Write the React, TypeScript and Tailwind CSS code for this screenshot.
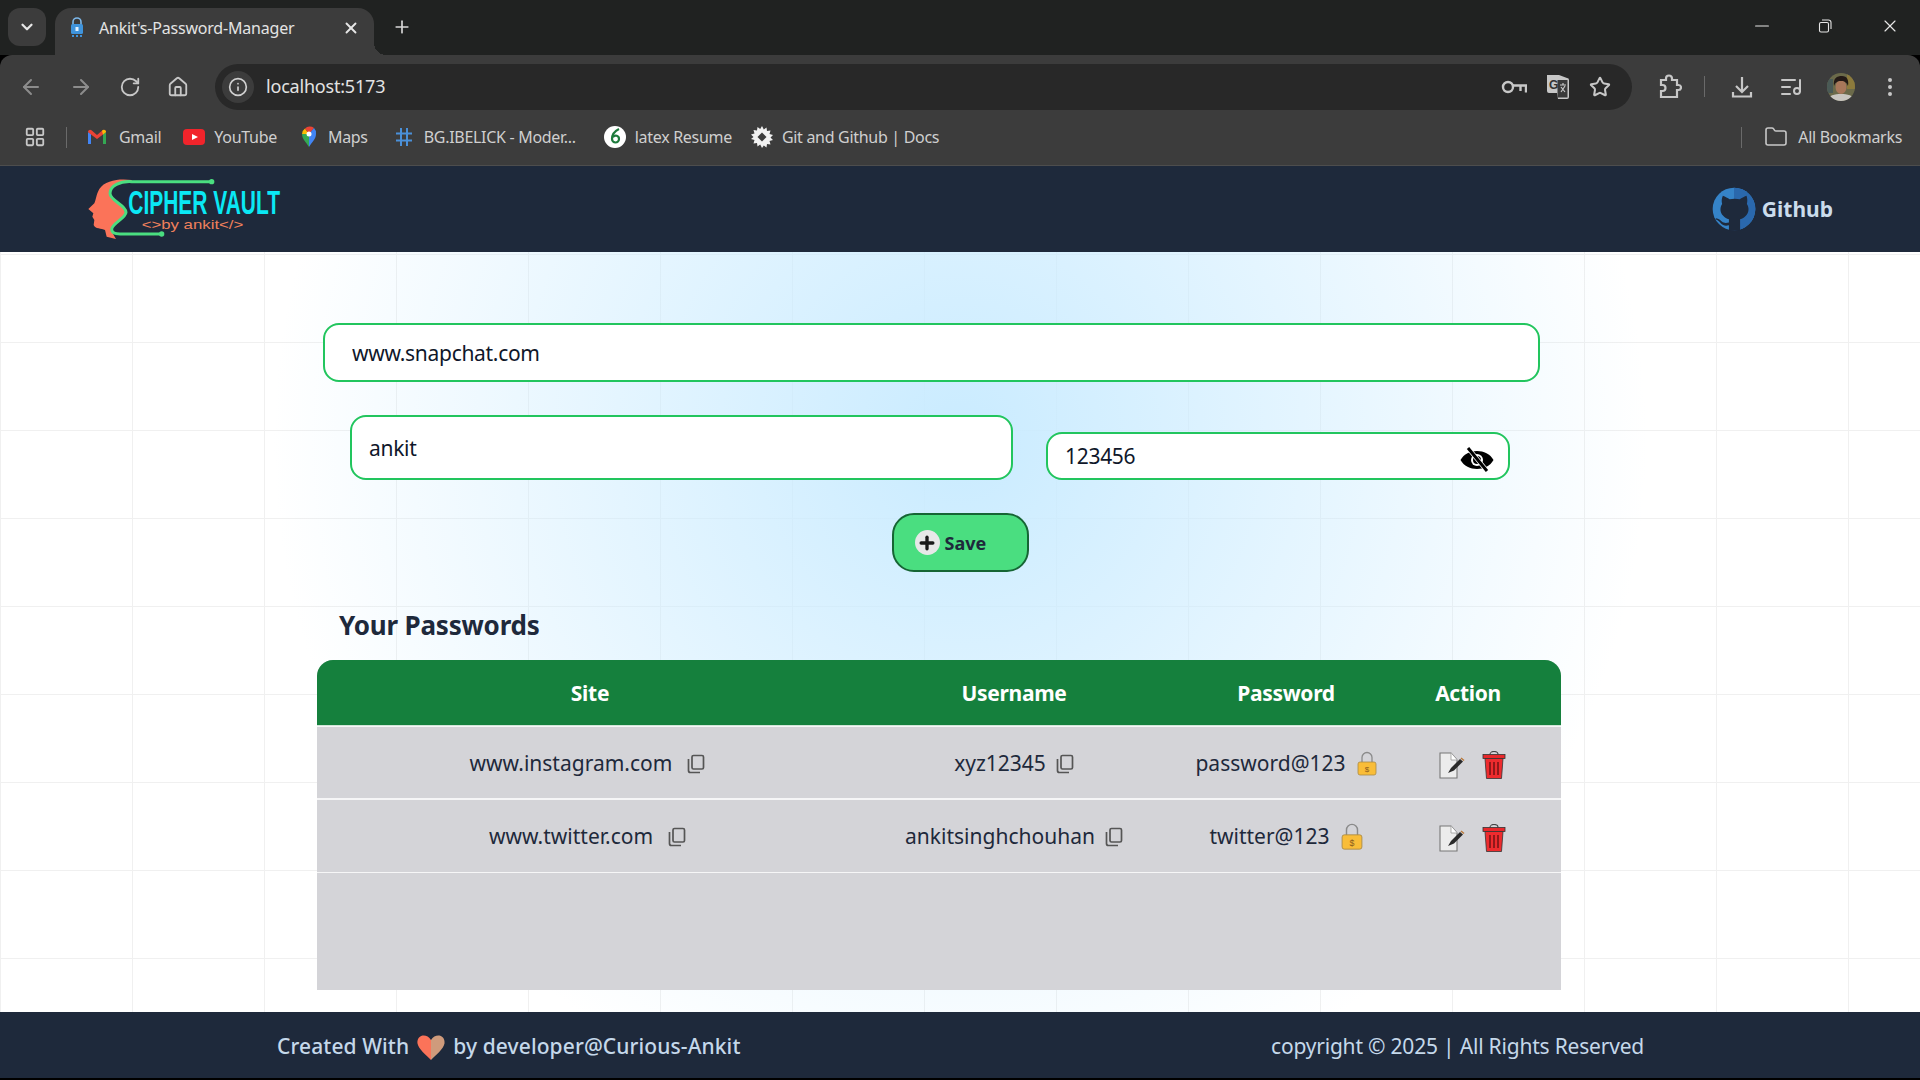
import { ArrowLeft, ArrowRight, ChevronDown, EllipsisVertical, Folder, House, Info, LayoutGrid, ListMusic, Minus, Plus, RotateCw, Star, X } from "lucide-react"

const ROWS = [
  { site: "www.instagram.com", user: "xyz12345", pass: "password@123", big: false },
  { site: "www.twitter.com", user: "ankitsinghchouhan", pass: "twitter@123", big: true },
]

function TabLock() {
  return (
    <svg width="16" height="22" viewBox="0 0 16 22">
      <path d="M4 8V5a4 4 0 0 1 8 0v3" fill="none" stroke="#7db8ea" strokeWidth="1.6" />
      <rect x="2" y="7" width="12" height="10" rx="1.5" fill="#3f94dc" />
      <rect x="6.5" y="10" width="3" height="4" fill="#dff0ff" />
      <path d="M3 19h2M7 19h2M11 19h2" stroke="#3f94dc" strokeWidth="2" />
    </svg>
  )
}

function GmailIcon() {
  return (
    <svg width="20" height="16" viewBox="0 0 20 16">
      <path d="M1 15V3l3 2v10z" fill="#4285f4" />
      <path d="M16 15V5l3-2v12z" fill="#34a853" />
      <path d="M1 3c0-2 2-3 3.500-1.800L10 6l5.500-4.800C17 0 19 1 19 3l-3 2.500-6 4.500-6-4.500z" fill="#ea4335" />
      <path d="M16 5.500l3-2.500c0-2-2-3-3.500-1.800L15 2z" fill="#fbbc04" />
    </svg>
  )
}

function YoutubeIcon() {
  return (
    <svg width="22" height="16" viewBox="0 0 22 16">
      <rect width="22" height="16" rx="4" fill="#f1242b" />
      <path d="M9 5l6 3-6 3z" fill="#fff" />
    </svg>
  )
}

function MapsIcon() {
  return (
    <svg width="16" height="22" viewBox="0 0 16 22">
      <path d="M8 21C5 16 1 13 1 8h7z" fill="#34a853" />
      <path d="M8 21c3-5 7-8 7-13H8z" fill="#4285f4" />
      <path d="M1 8a7 7 0 0 1 3-5.500L8 8z" fill="#fbbc04" />
      <path d="M4 2.500A7 7 0 0 1 13 2L8 8z" fill="#ea4335" />
      <path d="M13 2a7 7 0 0 1 2 6H8z" fill="#4285f4" />
      <circle cx="8" cy="8" r="2.500" fill="#fff" />
    </svg>
  )
}

function HashIcon() {
  return (
    <svg width="18" height="20" viewBox="0 0 18 20" fill="none" stroke="#4a90d9" strokeWidth="2">
      <path d="M6 1v18M12 1v18M1 6.500h16M1 13.500h16" />
    </svg>
  )
}

function LatexIcon() {
  return (
    <svg width="22" height="22" viewBox="0 0 22 22">
      <circle cx="11" cy="11" r="11" fill="#fff" />
      <path d="M15 3c-4 2-7 6-7 10a3.500 3.500 0 1 0 7 0 3.300 3.300 0 0 0-6-2" fill="none" stroke="#1d7a3c" strokeWidth="2.200" />
    </svg>
  )
}

function GearIcon() {
  return (
    <svg width="22" height="22" viewBox="0 0 22 22" fill="#f2f2f2">
      <path d="M11 0l1.800 3.500L15.500 1.500l.5 3.500 3.500-.5-1 3.500 3.500 1-2.500 2.500 2.500 2.500-3.500 1 1 3.500-3.500-.5-.5 3.500-2.700-2L11 22l-1.800-3.500-2.700 2-.5-3.500-3.500.5 1-3.500-3.500-1L2.500 11 0 8.500l3.500-1-1-3.500 3.500.5.500-3.500 2.700 2z" />
      <path d="M11 6.500l4.500 4.500-4.500 4.500L6.500 11z" fill="#3c3c3c" />
    </svg>
  )
}

function KeyIcon() {
  return (
    <svg width="26" height="18" viewBox="0 0 26 18" fill="none" stroke="#c7c7c7" strokeWidth="2.400">
      <circle cx="7" cy="9" r="5" />
      <path d="M12 7.500h13v7M19.500 8v5" />
    </svg>
  )
}

function TranslateIcon() {
  return (
    <svg width="24" height="26" viewBox="0 0 24 26">
      <path d="M1 1h12l8 3a2 2 0 0 1 2 2v17a2 2 0 0 1-2 2H12l-1-6H3a2 2 0 0 1-2-2z" fill="#c7c7c7" />
      <rect x="11.500" y="6" width="10" height="17.500" fill="#3a3a3a" />
      <text x="3" y="15" fontSize="12" fontWeight="700" fill="#333" fontFamily="Liberation Sans, sans-serif">G</text>
      <path d="M14 11h6M17 9v2M15 18l4-6M15 13l4 5" stroke="#c7c7c7" strokeWidth="1.200" />
    </svg>
  )
}

function PuzzleIcon() {
  return (
    <svg width="24" height="26" viewBox="0 0 24 26" fill="none" stroke="#c7c7c7" strokeWidth="2.200">
      <path d="M3 6h5V4.500a3 3 0 0 1 6 0V6h5v5h1.500a2.500 2.500 0 0 1 0 5H19v7H3v-6h1.500a3 3 0 0 0 0-6H3z" />
    </svg>
  )
}

function DownloadIcon() {
  return (
    <svg width="24" height="24" viewBox="0 0 24 24" fill="none" stroke="#c7c7c7" strokeWidth="2.200">
      <path d="M12 2v15M6 11l6 6 6-6M3 17v4.500h18V17" />
    </svg>
  )
}

function Avatar() {
  return (
    <svg width="28" height="28" viewBox="0 0 28 28">
      <defs>
        <clipPath id="av">
          <circle cx="14" cy="14" r="14" />
        </clipPath>
      </defs>
      <g clipPath="url(#av)">
        <rect width="28" height="28" fill="#6b6a4a" />
        <rect x="20" width="8" height="16" fill="#8c7a3c" />
        <rect x="0" y="6" width="6" height="14" fill="#4a5a56" />
        <path d="M0 28c1-6 8-7 14-7s13 1 14 7z" fill="#c9c6c0" />
        <ellipse cx="14" cy="14" rx="5.500" ry="7" fill="#a8775a" />
        <path d="M7 13C6 5 10 3 15 3s7 4 6 10c-1-3-3-5-7-5s-6 2-7 5z" fill="#241a16" />
      </g>
    </svg>
  )
}

function RestoreIcon() {
  return (
    <svg width="14" height="14" viewBox="0 0 14 14" fill="none" stroke="#e6e6e6" strokeWidth="1.100">
      <rect x="1.500" y="3.500" width="9" height="9.500" rx="1.500" />
      <path d="M4 1h6.500A2.500 2.500 0 0 1 13 3.500V10" />
    </svg>
  )
}

function Logo() {
  return (
    <svg width="240" height="86" viewBox="0 3 720 258" className="overflow-visible">
      <path d="M215 45C180 40 135 45 118 72 108 90 108 105 103 115L85 132 100 145 97 155 103 165 101 180C105 192 125 190 135 195L140 215 168 222C160 205 150 200 160 185 175 170 198 155 195 140 190 120 155 105 152 85 150 65 185 50 215 48Z" fill="#fb7359" />
      <path d="M455 50H215C180 48 150 62 150 85 150 108 198 120 198 142 198 160 155 175 155 193 155 205 165 207 180 207H305" fill="none" stroke="#4ade80" strokeWidth="9" />
      <circle cx="455" cy="50" r="8" fill="#4ade80" />
      <circle cx="305" cy="207" r="8" fill="#4ade80" />
      <text x="205" y="148" fontSize="100" fontWeight="700" fill="#0ae8f5" textLength="455" lengthAdjust="spacingAndGlyphs" fontFamily="Liberation Sans, sans-serif">CIPHER VAULT</text>
      <text x="245" y="191" fontSize="40" fill="#f0805c" textLength="305" lengthAdjust="spacingAndGlyphs" fontFamily="Liberation Sans, sans-serif">{"<>by ankit</>"}</text>
    </svg>
  )
}

function GithubMark() {
  return (
    <svg width="44" height="44" viewBox="38 26 130 130">
      <circle cx="103" cy="91" r="63" fill="#3583c8" />
      <path d="M103 28a63 63 0 0 1 0 126z" fill="#2a68ad" />
      <path d="M70 52c8 3 14 7 20 10 9-2 21-2 30 0 6-3 12-7 20-10 3 9 3 17 1 24 7 10 7 25-3 35-5 6-10 9-17 10v34H88v-16c-10 3-18 1-24-6-4-5-8-9-16-12l2-3c8 1 13 6 17 10 6 5 12 5 21 3v-10c-7-1-12-4-17-10-10-10-10-25-3-35-2-7-2-15 2-24z" fill="#1e293b" />
    </svg>
  )
}

function EyeOff() {
  return (
    <svg width="34" height="25" viewBox="0 0 34 25">
      <path d="M0.500 13C7 1 27 1 33.500 13 27 25 7 25 0.500 13Z" fill="#000" />
      <circle cx="17" cy="13" r="6" fill="#fff" />
      <circle cx="17" cy="13" r="4" fill="#000" />
      <path d="M8 1l19 23" stroke="#fff" strokeWidth="4.500" />
      <path d="M8 1l19 23" stroke="#000" strokeWidth="3" />
    </svg>
  )
}

function CopyIcon() {
  return (
    <svg width="18" height="20" viewBox="0 0 18 20" fill="none" stroke="#555" strokeWidth="1.700" className="shrink-0">
      <rect x="5" y="1.500" width="11.500" height="13.500" rx="1.500" />
      <path d="M1.500 5v11.500a2 2 0 0 0 2 2H13" />
    </svg>
  )
}

function LockIcon({ big }: { big: boolean }) {
  return (
    <svg width={big ? 22 : 20} height={big ? 29 : 25} viewBox="0 0 20 25" className="shrink-0">
      <path d="M5 12V6.500a5 5 0 0 1 10 0V12" fill="none" stroke="#8a8a8a" strokeWidth="1.300" />
      <rect x="1" y="11" width="18" height="13" rx="2" fill="#f9bd38" stroke="#a98a48" strokeWidth="0.800" />
      <text x="10" y="21" fontSize="8" textAnchor="middle" fill="#8a5a1c" fontFamily="Liberation Sans, sans-serif">$</text>
    </svg>
  )
}

function EditIcon() {
  return (
    <svg width="26" height="27" viewBox="0 0 26 27">
      <path d="M1 1h11l6 7v18H1z" fill="#ececec" stroke="#777" strokeWidth="1.100" />
      <path d="M12 1v7h6" fill="#fff" stroke="#999" strokeWidth="0.800" />
      <path d="M9 21l3-5 9-9 3 2.500-9 9z" fill="#2a2a2a" />
      <path d="M22 6l3 2.500" stroke="#b9783a" strokeWidth="1.500" />
    </svg>
  )
}

function TrashIcon() {
  return (
    <svg width="24" height="29" viewBox="0 0 24 29">
      <path d="M8 3.500a4 3 0 0 1 8 0" fill="none" stroke="#444" strokeWidth="1.200" />
      <rect x="1" y="3.500" width="22" height="4" fill="#e8282b" stroke="#333" strokeWidth="0.800" />
      <path d="M3 7.500h18l-1.500 20h-15z" fill="#ee2b2e" stroke="#333" strokeWidth="0.800" />
      <path d="M8 11v13M12 11v13M16 11v13" stroke="#7a1416" strokeWidth="1.600" />
    </svg>
  )
}

function Heart() {
  return (
    <svg width="28" height="25" viewBox="0 0 28 25">
      <path d="M14 5C12 1 8 0 5.500 0.500 1.500 1.500 0 5 0.500 8.500 1.500 14 9 20 14 25z" fill="#fb7359" />
      <path d="M14 5c2-4 6-5 8.500-4.500 4 1 5.500 4.500 5 8C26.500 14 19 20 14 25z" fill="#cf9b7c" />
    </svg>
  )
}

export default function App() {
  return (
    <div className="flex h-screen flex-col overflow-hidden bg-black font-['Noto_Sans',sans-serif]">
      {/* tab strip */}
      <div className="flex h-[55px] shrink-0 items-end bg-[#202221] pl-2">
        <div className="mb-[9px] flex size-[38px] items-center justify-center rounded-xl bg-[#3c3c3c]">
          <ChevronDown size={18} strokeWidth={3} color="#e6e6e6" />
        </div>
        <div className="relative ml-[9px] flex h-[47px] w-[319px] items-center rounded-t-2xl bg-[#3c3c3c] pb-2 pl-[14px] pr-[14px]">
          <TabLock />
          <span className="ml-[14px] flex-1 text-[16px] tracking-[-0.2px] text-[#e3e3e3]">Ankit's-Password-Manager</span>
          <X size={18} strokeWidth={2.5} color="#e6e6e6" />
          <div className="absolute bottom-0 left-full size-3 bg-[radial-gradient(circle_at_100%_0,transparent_12px,#3c3c3c_12px)]" />
        </div>
        <div className="mb-[18px] ml-[18px]">
          <Plus size={20} strokeWidth={2} color="#d8d8d8" />
        </div>
        <div className="mb-[18px] ml-auto flex items-center pr-[20px]">
          <Minus size={22} strokeWidth={1.2} color="#e6e6e6" />
          <div className="ml-[45px]"><RestoreIcon /></div>
          <X size={20} strokeWidth={1.4} color="#e6e6e6" className="ml-[48px]" />
        </div>
      </div>

      {/* toolbar */}
      <div className="flex h-[63px] shrink-0 items-center rounded-t-xl bg-[#3c3c3c] pl-[19px] pr-[14px]">
        <div className="flex items-center gap-[26px]">
          <ArrowLeft size={24} color="#8c8c8c" />
          <ArrowRight size={24} color="#8c8c8c" />
          <RotateCw size={22} color="#c7c7c7" />
          <House size={22} color="#c7c7c7" />
        </div>
        <div className="ml-[26px] flex h-[46px] w-[1417px] items-center rounded-full bg-[#282828] pl-[7px] pr-[21px]">
          <div className="flex size-8 items-center justify-center rounded-full bg-[#3c3c3c]">
            <Info size={20} color="#d0d0d0" />
          </div>
          <span className="ml-3 text-[18px] tracking-[-0.2px] text-[#e3e3e3]">localhost:5173</span>
          <div className="ml-auto flex items-center gap-[19px]">
            <KeyIcon />
            <TranslateIcon />
            <Star size={22} color="#c7c7c7" strokeWidth={2.2} />
          </div>
        </div>
        <div className="ml-[26px] flex items-center">
          <PuzzleIcon />
          <div className="ml-[22px] h-[21px] w-px bg-[#6a6a6a]" />
          <div className="ml-[25px]"><DownloadIcon /></div>
          <div className="ml-[25px]"><ListMusic size={24} color="#c7c7c7" /></div>
          <div className="ml-[24px]"><Avatar /></div>
          <div className="ml-[23px]"><EllipsisVertical size={24} color="#c7c7c7" /></div>
        </div>
      </div>

      {/* bookmarks */}
      <div className="flex h-[48px] shrink-0 items-center border-b border-[#4d4d4d] bg-[#3c3c3c] pb-[9px] pl-6 pr-[18px] text-[16px] tracking-[-0.3px] text-[#cfcfcf]">
        <LayoutGrid size={22} color="#c7c7c7" />
        <div className="mx-[20px] h-[21px] w-px bg-[#6a6a6a]" />
        <div className="flex items-center gap-[12px]"><GmailIcon /><span>Gmail</span></div>
        <div className="ml-[22px] flex items-center gap-[9px]"><YoutubeIcon /><span>YouTube</span></div>
        <div className="ml-[24px] flex items-center gap-[11px]"><MapsIcon /><span>Maps</span></div>
        <div className="ml-[27px] flex items-center gap-[11px]"><HashIcon /><span>BG.IBELICK - Moder...</span></div>
        <div className="ml-[28px] flex items-center gap-[9px]"><LatexIcon /><span>latex Resume</span></div>
        <div className="ml-[19px] flex items-center gap-[9px]"><GearIcon /><span>Git and Github | Docs</span></div>
        <div className="ml-auto h-[21px] w-px bg-[#6a6a6a]" />
        <Folder size={24} color="#c7c7c7" strokeWidth={1.6} className="ml-[22px]" />
        <span className="ml-[10px]">All Bookmarks</span>
      </div>

      {/* page */}
      <div className="flex min-h-0 flex-1 flex-col bg-white [background-image:radial-gradient(circle_687px_at_50%_275px,#C9EBFF,transparent),linear-gradient(to_right,#f0f0f0_1.5px,transparent_1.5px),linear-gradient(to_bottom,#f0f0f0_1.5px,transparent_1.5px)] [background-size:100%_100%,132px_88px,132px_88px]">
        <nav className="flex h-[86px] shrink-0 items-center justify-between bg-[#1e293b] pl-[60px] pr-[87px]">
          <Logo />
          <div className="flex items-center gap-[6px]">
            <GithubMark />
            <span className="pt-[2px] text-[21px] font-bold text-[#cbdcec]">Github</span>
          </div>
        </nav>

        <main className="flex min-h-0 flex-1 flex-col pt-[71px]">
          <input
            readOnly
            value="www.snapchat.com"
            className="ml-[323px] h-[59px] w-[1217px] rounded-[16px] border-2 border-[#22c55e] bg-white px-[27px] text-[21px] tracking-[-0.3px] text-[#0f172a] outline-none"
          />
          <div className="ml-[350px] mt-[33px] flex items-end gap-[33px]">
            <input
              readOnly
              value="ankit"
              className="h-[65px] w-[663px] rounded-[16px] border-2 border-[#22c55e] bg-white px-[17px] text-[21px] tracking-[-0.3px] text-[#0f172a] outline-none"
            />
            <div className="relative w-[464px]">
              <input
                readOnly
                value="123456"
                className="h-[48px] w-full rounded-[16px] border-2 border-[#22c55e] bg-white px-[17px] text-[21px] tracking-[-0.3px] text-[#0f172a] outline-none"
              />
              <span className="absolute right-[16px] top-[15px]"><EyeOff /></span>
            </div>
          </div>
          <button className="mx-auto mt-[33px] flex h-[59px] w-[137px] items-center rounded-[22px] border-2 border-[#166534] bg-[#4ade80] pl-[21px] text-[18px] font-bold text-[#1e293b]">
            <span className="flex size-[25px] items-center justify-center rounded-full bg-[#e8e8e8]">
              <Plus size={20} strokeWidth={4} color="#1a1a1a" />
            </span>
            <span className="ml-[5px] pt-px">Save</span>
          </button>

          <h2 className="ml-[339px] mt-[34px] text-[26px] font-bold leading-[38px] tracking-[-0.2px] text-[#1e293b]">Your Passwords</h2>

          <div className="ml-[317px] mt-[16px] h-[330px] w-[1244px] overflow-hidden rounded-t-[16px] bg-[#d4d4d8]">
            <table className="w-full table-fixed border-collapse">
              <colgroup>
                <col className="w-[546px]" />
                <col className="w-[302px]" />
                <col className="w-[242px]" />
                <col className="w-[154px]" />
              </colgroup>
              <thead className="bg-[#15803d] text-[21px] font-bold tracking-[-0.3px] text-white">
                <tr className="h-[66px]">
                  <th className="pt-[2px]">Site</th>
                  <th className="pt-[2px]">Username</th>
                  <th className="pt-[2px]">Password</th>
                  <th className="pr-8 pt-[2px]">Action</th>
                </tr>
              </thead>
              <tbody className="text-[21px] text-[#1e293b]">
                {ROWS.map((r) => (
                  <tr key={r.site} className="h-[73px] border-t-2 border-white/80">
                    <td>
                      <div className="flex items-center justify-center gap-[15px] pr-[5px] pt-[2px]">
                        {r.site}
                        <CopyIcon />
                      </div>
                    </td>
                    <td>
                      <div className="flex items-center justify-center gap-[10px] pt-[2px]">
                        {r.user}
                        <CopyIcon />
                      </div>
                    </td>
                    <td>
                      <div className="flex items-center justify-center gap-[11px] pt-[2px]">
                        {r.pass}
                        <LockIcon big={r.big} />
                      </div>
                    </td>
                    <td className="pr-[23px]">
                      <div className="flex items-center justify-center gap-[17px] pt-[5px]">
                        <EditIcon />
                        <TrashIcon />
                      </div>
                    </td>
                  </tr>
                ))}
                <tr className="border-t border-white/80" />
              </tbody>
            </table>
          </div>
        </main>

        <footer className="flex h-[66px] shrink-0 items-center justify-between bg-[#1e293b] pl-[277px] pr-[276px] pt-[4px] text-[21px] text-[#c5d8ea]">
          <div className="flex items-center font-medium tracking-[0.1px]">
            Created With
            <span className="mx-[8px]"><Heart /></span>
            by developer@Curious-Ankit
          </div>
          <div className="tracking-[-0.2px]">copyright © 2025 | All Rights Reserved</div>
        </footer>
      </div>
      <div className="h-[2px] shrink-0 bg-black" />
    </div>
  )
}
